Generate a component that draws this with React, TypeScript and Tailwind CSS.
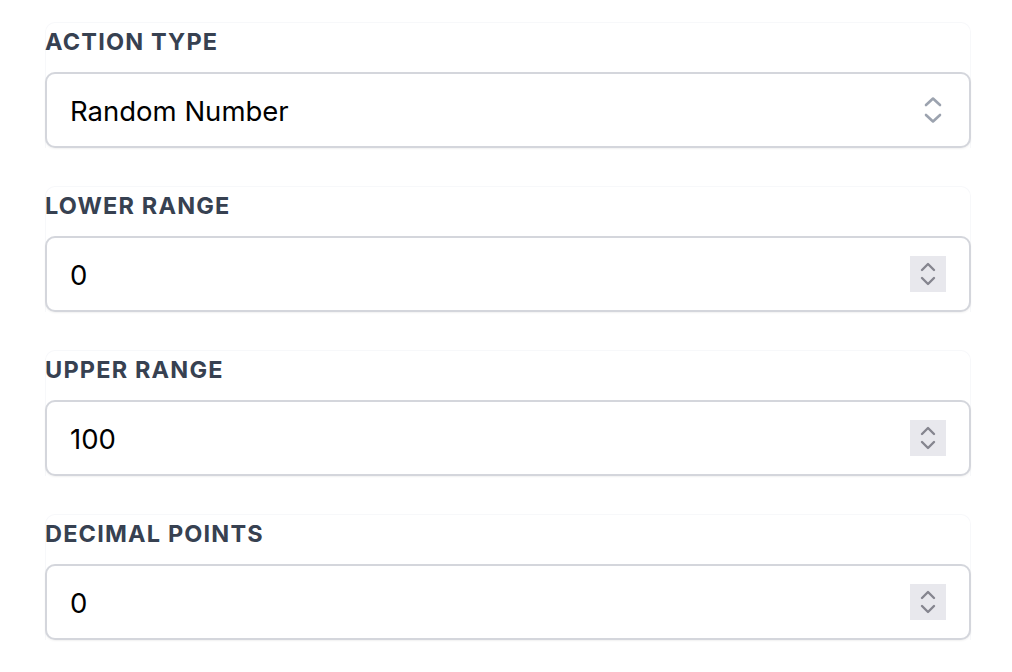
import React from "react";

function SelectChevrons() {
  return (
    <svg width="20" height="30" viewBox="0 0 20 30" fill="none" stroke="#9ca3af" strokeWidth="2.6" strokeLinecap="round" strokeLinejoin="round">
      <path d="M3 10 L10 3.5 L17 10" />
      <path d="M3 20 L10 26.5 L17 20" />
    </svg>
  );
}

function Spinner() {
  return (
    <div className="w-[36px] h-[36px] bg-[#e8e8ed] flex items-center justify-center">
      <svg width="18" height="28" viewBox="0 0 18 28" fill="none" stroke="#85858f" strokeWidth="2.4" strokeLinecap="round" strokeLinejoin="round">
        <path d="M3 10 L9 4 L15 10" />
        <path d="M3 18 L9 24 L15 18" />
      </svg>
    </div>
  );
}

function Field({ label, value, select }: { label: string; value: string; select?: boolean }) {
  return (
    <div className="border border-[#f7f8fa] border-b-0 rounded-t-[10px]">
      <div className="h-[49px] flex items-start pt-[7px] -mx-px">
        <span className="text-[23.5px] font-bold tracking-[0.05em] text-[#374151] leading-none">{label}</span>
      </div>
      <div className="-mx-px h-[76px] bg-white border-2 border-[#d4d6dc] rounded-[10px] shadow-[0_1px_2px_rgba(0,0,0,0.06)] flex items-center pl-[23px] pr-[23px]">
        <span className="flex-1 text-[27.5px] text-black leading-none pt-[4px]">{value}</span>
        {select ? (
          <div className="mr-[3px] flex items-center">
            <SelectChevrons />
          </div>
        ) : (
          <Spinner />
        )}
      </div>
    </div>
  );
}

export default function App() {
  return (
    <div className="w-[1012px] h-[672px] bg-white overflow-hidden" style={{ fontFamily: "Inter, 'Noto Sans', sans-serif" }}>
      <div className="pt-[22px] pl-[45px] pr-[41px] flex flex-col gap-[38px]">
        <Field label="ACTION TYPE" value="Random Number" select />
        <Field label="LOWER RANGE" value="0" />
        <Field label="UPPER RANGE" value="100" />
        <Field label="DECIMAL POINTS" value="0" />
      </div>
    </div>
  );
}
